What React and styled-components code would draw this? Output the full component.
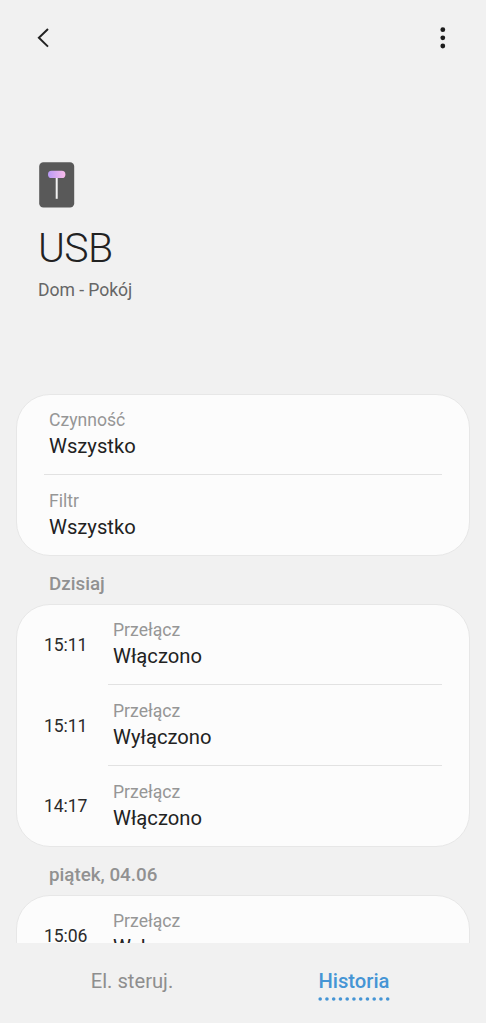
import styled, { createGlobalStyle } from "styled-components";

const today = [
    { time: "15:11", value: "Włączono" },
    { time: "15:11", value: "Wyłączono" },
    { time: "14:17", value: "Włączono" },
]

const friday = [
    { time: "15:06", value: "Wyłączono" },
]

const dots = Array.from({ length: 11 }, (_, i) => 2.2 + i * 6.75)

const HistoryCard = ({ items }) => (
    <Card>
        {items.map((item, i) => (
            <HistoryRow key={i}>
                <Time>{item.time}</Time>
                <Entry $divided={i > 0}>
                    <Label>Przełącz</Label>
                    <Value>{item.value}</Value>
                </Entry>
            </HistoryRow>
        ))}
    </Card>
)

const App = () => {
    return (
        <>
            <GlobalStyle />
            <Screen>
                <TopBar>
                    <IconBtn aria-label="Wstecz">
                        <svg width="14" height="20" viewBox="0 0 14 20" fill="none">
                            <path d="M12 1 2.9 9.8l9.1 8.8" stroke="#222" strokeWidth="2" />
                        </svg>
                    </IconBtn>
                    <IconBtn aria-label="Więcej">
                        <svg width="6" height="24" viewBox="0 0 6 24" fill="#1c1c1c">
                            <circle cx="2.8" cy="3.7" r="2.4" />
                            <circle cx="2.8" cy="11.8" r="2.4" />
                            <circle cx="2.8" cy="20" r="2.4" />
                        </svg>
                    </IconBtn>
                </TopBar>
                <Header>
                    <svg width="36" height="46" viewBox="0 0 36 46">
                        <defs>
                            <linearGradient id="plug" x1="0" x2="1">
                                <stop offset="0" stopColor="#b99af5" />
                                <stop offset="1" stopColor="#fbbdeb" />
                            </linearGradient>
                        </defs>
                        <rect x="0.2" y="0.2" width="35" height="45.4" rx="4.2" fill="#595959" />
                        <rect x="16.7" y="15" width="2" height="21.8" fill="#f2f2f2" />
                        <rect x="9" y="8.8" width="17.4" height="7.2" rx="3.6" fill="url(#plug)" />
                    </svg>
                    <Title>USB</Title>
                    <Place>Dom - Pokój</Place>
                </Header>
                <Content>
                    <Card>
                        <FilterRow>
                            <Label>Czynność</Label>
                            <Value>Wszystko</Value>
                        </FilterRow>
                        <FilterRow $divided>
                            <Label>Filtr</Label>
                            <Value>Wszystko</Value>
                        </FilterRow>
                    </Card>
                    <Day>Dzisiaj</Day>
                    <HistoryCard items={today} />
                    <Day>piątek, 04.06</Day>
                    <HistoryCard items={friday} />
                </Content>
                <Tabs>
                    <Tab>El. steruj.</Tab>
                    <Tab $active>
                        Historia
                        <svg width="72" height="4" viewBox="0 0 72 4" fill="#4595d5">
                            {dots.map((x) => <circle key={x} cx={x} cy="2" r="1.8" />)}
                        </svg>
                    </Tab>
                </Tabs>
            </Screen>
        </>
    )
}

const GlobalStyle = createGlobalStyle`

    * {
        box-sizing: border-box;
    }

    body {
        margin: 0;
        background-color: #f1f1f1;
        font-family: Roboto, sans-serif;
    }

`

const Screen = styled.div`

    display: flex;
    flex-direction: column;
    width: 486px;
    height: 1023px;
    overflow: hidden;
    background-color: #f1f1f1;

`

const TopBar = styled.div`

    display: flex;
    flex: none;
    justify-content: space-between;
    align-items: center;
    height: 76px;
    padding: 0 40px 0 36px;

`

const IconBtn = styled.button`

    display: flex;
    padding: 0;
    border: 0;
    background: none;
    cursor: pointer;

`

const Header = styled.header`

    display: flex;
    flex: none;
    flex-direction: column;
    align-items: flex-start;
    height: 318px;
    padding: 86px 38px 0;

    svg {
        margin-left: 1px;
    }

`

const Title = styled.h1`

    margin: 16px 0 0;
    font-size: 41px;
    font-weight: 300;
    letter-spacing: -0.6px;
    line-height: 48px;
    color: #222;

`

const Place = styled.div`

    margin-top: 6px;
    font-size: 17.6px;
    letter-spacing: -0.05px;
    line-height: 24px;
    color: #666;

`

const Content = styled.main`

    flex: 1;
    min-height: 0;
    overflow: hidden;
    padding: 0 16px;

`

const Card = styled.section`

    border: 1px solid #e7e7e7;
    border-radius: 34px;
    background-color: #fcfcfc;

`

const FilterRow = styled.div`

    height: 79px;
    margin: 0 27px;
    padding: 14px 5px 0;
    border-top: ${({ $divided }) => $divided ? "1px solid #e2e2e2" : "0"};

    & + & {
        height: 81px;
        padding-top: 15px;
    }

`

const HistoryRow = styled.div`

    display: flex;
    height: 81px;
    padding: 0 27px 0 26px;

    &:first-child {
        height: 79px;
    }

`

const Time = styled.div`

    width: 65px;
    padding: 30px 0 0 1px;
    font-size: 17.6px;
    letter-spacing: -0.12px;
    line-height: 22px;
    color: #2a2a2a;

    ${HistoryRow}:first-child & {
        padding-top: 29px;
    }

    ${HistoryRow}:nth-child(2) & {
        padding-top: 31px;
    }

`

const Entry = styled.div`

    flex: 1;
    padding: ${({ $divided }) => $divided ? "15px" : "14px"} 5px 0;
    border-top: ${({ $divided }) => $divided ? "1px solid #e2e2e2" : "0"};

`

const Label = styled.div`

    font-size: 17.6px;
    line-height: 22px;
    color: #969696;

`

const Value = styled.div`

    margin-top: 1px;
    font-size: 20.2px;
    line-height: 28px;
    color: #222;

`

const Day = styled.h2`

    height: 48px;
    margin: 0;
    padding: 16px 33px 0;
    font-size: 18.8px;
    font-weight: 500;
    line-height: 24px;
    color: #919191;

`

const Tabs = styled.nav`

    display: grid;
    flex: none;
    grid-template-columns: 1fr 1fr;
    height: 80px;
    padding: 26px 21px 0;

`

const Tab = styled.div`

    display: flex;
    flex-direction: column;
    align-items: center;
    gap: 4px;
    font-size: 20.2px;
    font-weight: ${({ $active }) => $active ? 500 : 400};
    line-height: 24px;
    color: ${({ $active }) => $active ? "#4595d5" : "#8e8e8e"};

`

export default App
